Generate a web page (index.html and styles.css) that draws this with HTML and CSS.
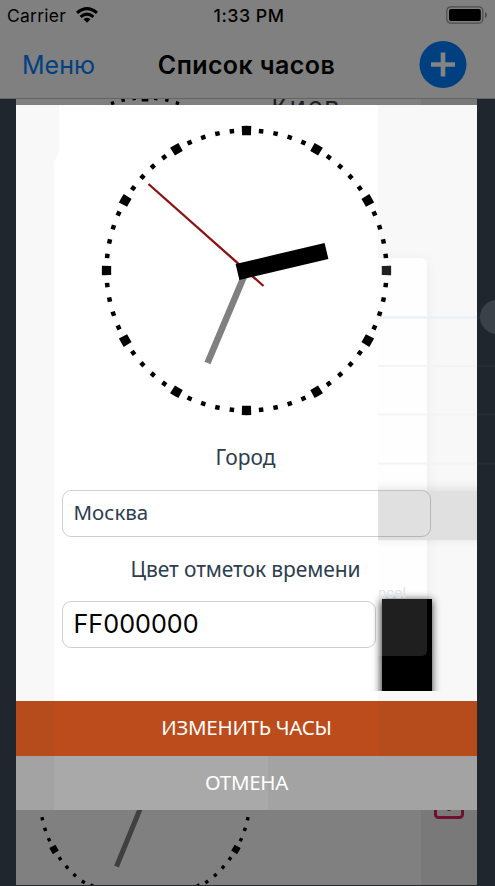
FILE: index.html
```html
<!DOCTYPE html>
<html lang="ru">
<head>
<meta charset="utf-8">
<title>Список часов</title>
<link rel="stylesheet" href="styles.css">
</head>
<body>
<div class="screen">
  <header class="header">
    <div class="status">
      <div class="carrier"><span>Carrier</span>
        <svg width="22" height="16" viewBox="0 0 22 16"><g fill="none" stroke="#000" stroke-width="3"><path d="M1 5.800Q11 -2.600 21 5.800"/><path d="M4.600 9.800Q11 4.400 17.400 9.800"/></g><path d="M7.500 12.200Q11 9.400 14.500 12.200L11 15.800Z"/></svg>
      </div>
      <span class="time">1:33 PM</span>
      <svg class="battery" width="42" height="18" viewBox="0 0 42 18"><rect x=".8" y=".8" width="36" height="16.4" rx="4" fill="none" stroke="#4b4b4b" stroke-width="1.2"/><rect x="3" y="3" width="31.8" height="12" rx="2"/><path d="M39 6Q41 7 41 9Q41 11 39 12Z" fill="#4b4b4b"/></svg>
    </div>
    <nav class="nav">
      <a class="menu">Меню</a>
      <h1>Список часов</h1>
      <svg class="add" width="48" height="48" viewBox="0 0 48 48"><circle cx="24" cy="23.500" r="23.500" fill="#003f80"/><path d="M24 11.500V35.500M12 23.500H36" stroke="#848484" stroke-width="4.600"/></svg>
    </nav>
  </header>
  <main class="list">
    <section class="row row-first">
      <svg class="mini" width="240" height="240" viewBox="0 0 240 240"><circle class="minute-marks" cx="120" cy="120" r="105" pathLength="60"/><circle class="hour-marks" cx="120" cy="120" r="105" pathLength="12"/></svg>
      <span class="city">Киев</span>
      <div class="tools"></div>
    </section>
    <section class="row row-second">
      <svg class="mini" width="240" height="240" viewBox="0 0 240 240"><circle class="minute-marks" cx="120" cy="120" r="105" pathLength="60"/><circle class="hour-marks" cx="120" cy="120" r="105" pathLength="12"/><path d="M120 120L91.500 189.500" stroke="#404040" stroke-width="5"/></svg>
      <div class="tools"><svg class="delete" width="30" height="30" viewBox="0 0 30 30" fill="none" stroke="#70102c" stroke-width="3"><rect x="1.500" y="1.500" width="27" height="27" rx="3"/><path d="M15 8V22"/></svg></div>
    </section>
  </main>

  <div class="dialog">
    <svg class="panel-shade" width="461" height="596" viewBox="16 105 461 596">
      <defs>
        <filter id="soft" x="-30%" y="-30%" width="160%" height="160%"><feGaussianBlur stdDeviation="7"/></filter>
        <filter id="tight" x="-50%" y="-50%" width="200%" height="200%"><feGaussianBlur stdDeviation="4.500"/></filter>
        <clipPath id="side"><rect x="378" y="105" width="99" height="596"/></clipPath>
        <clipPath id="swatch"><rect x="360" y="580" width="100" height="111"/></clipPath>
      </defs>
      <path d="M59 105H378V701H54V163Q54 160 57 157Q59 154 59 150Z" fill="#fff"/>
      <g clip-path="url(#side)">
        <rect x="328" y="260" width="99" height="396" rx="6" fill="#000" opacity=".05" filter="url(#soft)"/>
        <rect x="340" y="258" width="87" height="398" rx="6" fill="#fefefe"/>
        <path d="M378 366H477M378 414.500H477M378 463.500H477" stroke="#f4f4f4" stroke-width="2"/>
        <path d="M378 317.500H477" stroke="#eaf1fa" stroke-width="2.500"/>
        <rect x="368" y="487" width="119" height="53" fill="#000" opacity=".08" filter="url(#tight)"/>
        <rect x="378" y="491" width="99" height="49" fill="#e0e0e0"/>
      </g>
      <g clip-path="url(#swatch)">
        <rect x="381" y="600" width="51" height="105" opacity=".8" filter="url(#tight)"/>
        <rect x="382" y="599" width="50" height="92"/>
        <path d="M382 599H427V650Q427 656 421 656H382Z" fill="#1f1f1f"/>
      </g>
    </svg>
    <div class="form">
      <svg class="clock" width="300" height="300" viewBox="-.5 -.5 300 300">
        <circle class="minute-marks" cx="150" cy="150" r="140" pathLength="60"/>
        <circle class="hour-marks" cx="150" cy="150" r="140" pathLength="12"/>
        <path d="M285.500 145.500h9v9h-9z" fill="#1f1f1f"/>
        <path d="M150 150L111 242.500" stroke="#808080" stroke-width="6.500"/>
        <path d="M52 63.500L167 165.500" stroke="#8b1111" stroke-width="2.300"/>
        <path d="M141 151.500L230 130.500" stroke="#000" stroke-width="16.500"/>
      </svg>
      <label class="label city-label"><span>Город</span></label>
      <div class="field"><span>Москва</span></div>
      <label class="label color-label"><span>Цвет отметок времени</span></label>
      <div class="field color-field"><span>FF000000</span></div>
    </div>
    <div class="ghost-word"><span>ncel</span></div>
    <button class="apply"><span>ИЗМЕНИТЬ ЧАСЫ</span></button>
    <button class="cancel"><span>ОТМЕНА</span></button>
  </div>
  <svg class="edge" width="18" height="240" viewBox="0 0 18 240"><path d="M0 66H18M0 114.500H18M0 163.500H18" stroke="#262d35" stroke-width="2"/><path d="M0 17.500H4" stroke="#233246" stroke-width="2"/><circle cx="20" cy="17" r="17" fill="#3b4148"/></svg>
</div>
</body>
</html>
```
FILE: styles.css
```css
* { box-sizing: border-box; }
body { margin: 0; font-family: "Noto Sans", sans-serif; }
svg { display: block; flex: none; }
span { white-space: nowrap; }
.screen { position: relative; width: 495px; height: 886px; overflow: hidden; background: #1f262e; display: flex; flex-direction: column; }
.header { height: 99px; flex: none; background: #808080; border-bottom: 1px solid #646464; font-family: Inter, sans-serif; color: #000; }
.status { height: 30px; display: grid; grid-template-columns: 1fr auto 1fr; align-items: center; padding: 0 7px; font-size: 17.500px; }
.carrier { display: flex; align-items: center; gap: 10px; letter-spacing: .25px; }
.time { font-weight: 500; letter-spacing: .5px; margin-left: 3px; font-size: 17.800px; }
.battery { justify-self: end; }
.nav { height: 69px; display: grid; grid-template-columns: 1fr auto 1fr; align-items: center; padding: 0 28px 0 22px; }
.menu { color: #003f80; font-size: 25px; }
.nav h1 { margin: 0 0 0 4px; font-size: 25px; font-weight: 600; letter-spacing: .4px; }
.add { justify-self: end; }
.list { flex: 1; margin: 0 18px 0 16px; background: #808080; border-bottom: 1px solid #252a30; overflow: hidden; display: flex; flex-direction: column; }
.row { display: flex; flex: none; position: relative; overflow: hidden; }
.row-first { height: 578px; align-items: flex-start; }
.row-second { height: 230px; }
.mini { margin-left: 9px; }
.row-first .mini { margin-top: -16px; }
.minute-marks, .hour-marks { fill: none; stroke: #000; }
.mini .minute-marks { stroke-width: 3.400; stroke-dasharray: .31 .69; stroke-dashoffset: .155; }
.mini .hour-marks { stroke-width: 7; stroke-dasharray: .127 .873; stroke-dashoffset: .0635; }
.city { font-size: 27px; line-height: 36px; letter-spacing: 1.500px; color: #1a2129; margin: -11px 0 0 6px; }
.tools { width: 56px; margin-left: auto; background: #797979; align-self: stretch; }
.delete { margin: 112px 0 0 13px; }
.dialog { position: absolute; left: 16px; top: 105px; width: 461px; height: 705px; background: #f8f8f8; display: flex; flex-direction: column; }
.panel-shade { position: absolute; left: 0; top: 0; }
.form { position: relative; height: 596px; display: flex; flex-direction: column; align-items: flex-start; padding: 15px 46px 0; }
.clock { margin-left: 34px; }
.clock .minute-marks { stroke-width: 4.500; stroke-dasharray: .31 .69; stroke-dashoffset: .155; }
.clock .hour-marks { stroke-width: 9.300; stroke-dasharray: .127 .873; stroke-dashoffset: .0635; }
.label { width: 100%; height: 30px; line-height: 30px; text-align: center; color: #2d3d4e; font-size: 21px; }
.label span { position: relative; left: -1px; }
.city-label { margin-top: 22px; margin-bottom: 18px; }
.color-label { margin-top: 17px; margin-bottom: 17px; letter-spacing: -.1px; }
.field { width: 369px; height: 47px; border: 1px solid rgba(0,0,0,.19); border-radius: 9px; padding: 0 10.500px; display: flex; align-items: center; color: #2d3d4e; font-size: 20.500px; }
.field span { position: relative; top: -2px; }
.color-field { width: 314px; font-family: Inter, sans-serif; font-size: 25.200px; color: #000; }
.color-field span { top: -1px; }
.ghost-word { position: absolute; left: 362px; top: 479px; font: 14px/18px Inter, sans-serif; color: #d8e4ec; }
.apply, .cancel { position: relative; border: 0; padding: 0 0 2px; height: 54.500px; color: #fff; font-family: "Noto Sans", sans-serif; font-size: 20.500px; letter-spacing: -.3px; }
.apply { background: linear-gradient(90deg, #b64b1b 38px, #bc4c1b 38px 362px, #b64b1b 362px); }
.cancel { background: linear-gradient(90deg, #a3a3a3 38px, #a9a9a9 38px 252px, #a3a3a3 252px); }
.edge { position: absolute; left: 477px; top: 300px; }
```
